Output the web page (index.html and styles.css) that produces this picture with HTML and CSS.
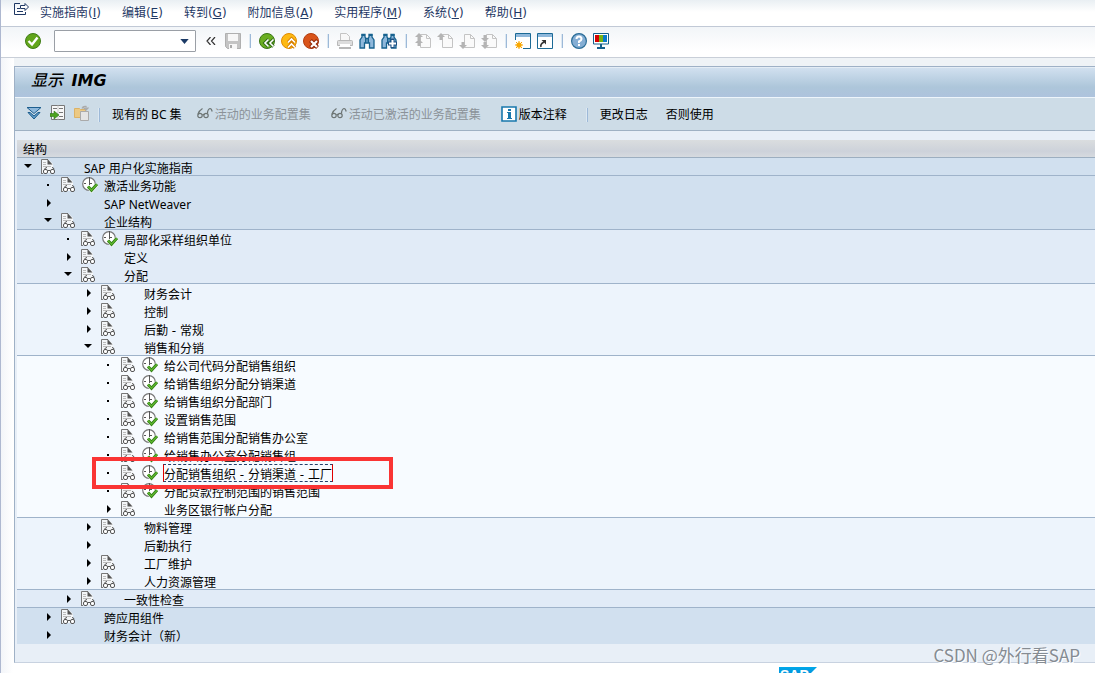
FILE: index.html
```html
<!DOCTYPE html>
<html lang="zh-CN">
<head>
<meta charset="utf-8">
<title>显示 IMG</title>
<link rel="stylesheet" href="styles.css">
</head>
<body>
<svg class="sprite" aria-hidden="true">
  <symbol id="doc" viewBox="0 0 16 16">
    <path d="M1 0h7l5 5v9H1z" fill="#f4f6f8"/>
    <path d="M1.500 15V.500H8M1 14.500h2" fill="none" stroke="#777"/>
    <path d="M7.500 0L12.500 5.500h-5z" fill="#555"/>
    <path d="M3 3.500h3M3 5.500h3M3 7.500h8" stroke="#bbb"/>
    <path d="M4.500 10.500Q5 8.500 7 8.500M14 10.500Q14 8.500 12 8.500M8 11.500h2" fill="none" stroke="#555"/>
    <rect x="3.500" y="10.500" width="4" height="4" rx="1.500" fill="#fff" stroke="#555"/>
    <rect x="10.500" y="10.500" width="4" height="4" rx="1.500" fill="#fff" stroke="#555"/>
  </symbol>
  <symbol id="run" viewBox="0 0 16 16">
    <circle cx="7" cy="7" r="6.300" fill="#fff" stroke="#777" stroke-width="1.200"/>
    <path d="M7.500 0v8M7 6.500h3M2 6.500h2" fill="none" stroke="#555"/>
    <path d="M6 9.500l3.500 4L15 7.500" fill="none" stroke="#fff" stroke-width="4"/>
    <path d="M6 9.500l3.500 3.800L15 7.200" fill="none" stroke="#2f7d18" stroke-width="3"/>
    <path d="M6 9.500l3.500 3.800L15 7.200" fill="none" stroke="#5db52c" stroke-width="1.400"/>
  </symbol>
  <symbol id="glasses" viewBox="0 0 16 16">
    <path d="M.800 8.500Q2 4.500 5.500 2.500M5.500 9q1-1.500 2 0M10.500 7.500Q10.500 3.500 13 2.500q1.500 0 2.200 3" fill="none" stroke="#6c7473" stroke-width="1.200"/>
    <circle cx="3" cy="9.500" r="2.200" fill="none" stroke="#6c7473" stroke-width="1.200"/>
    <circle cx="9" cy="9.500" r="2.200" fill="none" stroke="#6c7473" stroke-width="1.200"/>
  </symbol>
  <symbol id="page" viewBox="0 0 16 16">
    <path d="M5.500 1.500h6l4 4v9h-10z" fill="#fafafa" stroke="#c4c4c4"/>
    <path d="M11.500 1.500v4h4" fill="none" stroke="#c4c4c4"/>
  </symbol>
  <symbol id="up" viewBox="0 0 8 8"><path d="M4 0l4 4H5.500v3h-3V4H0z" fill="#b4b4b4"/></symbol>
  <symbol id="down" viewBox="0 0 8 8"><path d="M4 8l4-4H5.500V1h-3v3H0z" fill="#b4b4b4"/></symbol>
  <symbol id="binoculars" viewBox="0 0 16 16">
    <path d="M3 1.500h3V4l1 1.500h2L10 4V1.500h3V4l2 3v8h-4.500v-5h-5v5H1V7l2-3z" fill="#8fb8db" stroke="#17628f" stroke-width="1.300"/>
    <path d="M6.500 5v5M9.500 5v5M8 5.500v4" stroke="#17628f"/>
    <path d="M2.500 1H6v2H2.500zM10 1h3.500v2H10z" fill="#17628f"/>
  </symbol>
</svg>

<div class="window">
  <nav class="menubar">
    <button class="system-menu" aria-label="系统菜单"><svg class="icon" viewBox="0 0 16 16"><path d="M7 2.500H1.500v11h11V11M4 7.500h3M4 10.500h6" fill="none" stroke="#1f3864"/><path d="M7.500 4.500H12v-2l3.500 3.500L12 9.500v-2H7.500z" fill="#fff" stroke="#1f3864"/></svg></button>
    <button>实施指南(<u>I</u>)</button>
    <button>编辑(<u>E</u>)</button>
    <button>转到(<u>G</u>)</button>
    <button>附加信息(<u>A</u>)</button>
    <button>实用程序(<u>M</u>)</button>
    <button>系统(<u>Y</u>)</button>
    <button>帮助(<u>H</u>)</button>
  </nav>

  <div class="toolbar">
    <button aria-label="确认"><svg class="icon" viewBox="0 0 16 16"><circle cx="8" cy="8" r="7.500" fill="#62a51b" stroke="#3f7d16"/><path d="M3.500 8l3.500 3.500 5.500-7" fill="none" stroke="#fff" stroke-width="2.400"/></svg></button>
    <div class="command">
      <input type="text" aria-label="命令">
      <button aria-label="展开"><svg viewBox="0 0 10 6"><path d="M0 0h10L5 6z" fill="#1b3a66"/></svg></button>
    </div>
    <button class="collapse" aria-label="收起"><svg viewBox="0 0 10 8"><path d="M4.500 0L1 4l3.500 4M9 0L5.500 4 9 8" fill="none" stroke="#333" stroke-width="1.200"/></svg></button>
    <button aria-label="保存"><svg class="icon" viewBox="0 0 16 16"><path d="M.5.500h15v15h-13l-2-2z" fill="#c4c4c4" stroke="#b0b0b0"/><path d="M3 1h10v7H3zM4 11h8v5H4z" fill="#f7f7f7"/><path d="M5 12h2v3H5z" fill="#aaa"/></svg></button>
    <span class="sep"></span>
    <button aria-label="返回"><svg class="icon" viewBox="0 0 16 16"><circle cx="8" cy="8" r="7.500" fill="#6aae20" stroke="#397615"/><path d="M9.500 6.500L6 10l3.500 3.500M14.500 6.500L11 10l3.500 3.500" fill="none" stroke="#2f6a14" stroke-width="3.400"/><path d="M9.500 6.500L6 10l3.500 3.500M14.500 6.500L11 10l3.500 3.500" fill="none" stroke="#fff" stroke-width="1.600"/></svg></button>
    <button aria-label="退出"><svg class="icon" viewBox="0 0 16 16"><circle cx="8" cy="8" r="7.500" fill="#fdb913" stroke="#e08a00"/><path d="M7 9.500L10.500 6 14 9.500M7 14.500l3.500-3.500 3.500 3.500" fill="none" stroke="#d47c00" stroke-width="3.400"/><path d="M7 9.500L10.500 6 14 9.500M7 14.500l3.500-3.500 3.500 3.500" fill="none" stroke="#fff" stroke-width="1.600"/></svg></button>
    <button aria-label="取消"><svg class="icon" viewBox="0 0 16 16"><circle cx="8" cy="8" r="7.500" fill="#d9541a" stroke="#b23d10"/><path d="M7.500 7.500l7 7M14.500 7.500l-7 7" stroke="#8c2408" stroke-width="4"/><path d="M8 8l6 6M14 8l-6 6" stroke="#fff" stroke-width="2.200"/></svg></button>
    <span class="sep"></span>
    <button aria-label="打印"><svg class="icon" viewBox="0 0 16 16"><path d="M3.500 8V.5h6l3 3V8" fill="#f8f8f8" stroke="#c4c4c4"/><path d="M.5 8.500q0-1 1-1h13q1 0 1 1v4H.5z" fill="#ddd" stroke="#b8b8b8"/><path d="M3 11h10v4H3z" fill="#fff"/><path d="M2 15h12" stroke="#b8b8b8" stroke-width="2"/></svg></button>
    <button aria-label="查找"><svg class="icon" viewBox="0 0 16 16"><use href="#binoculars"/></svg></button>
    <button aria-label="继续查找"><svg class="icon" viewBox="0 0 16 16"><use href="#binoculars"/><path d="M9.500 5.500h4v3h2.500v4h-2.500V15h-4v-2.500H7v-4h2.500z" fill="#1b4f83"/><path d="M11.500 7v7M8 10.500h7" stroke="#fff" stroke-width="2"/></svg></button>
    <span class="sep"></span>
    <button aria-label="首页"><svg class="icon" viewBox="0 0 16 16"><use href="#page"/><use href="#up" width="8" height="8"/><use href="#up" y="6" width="8" height="8"/></svg></button>
    <button aria-label="上一页"><svg class="icon" viewBox="0 0 16 16"><use href="#page"/><use href="#up" width="8" height="8"/></svg></button>
    <button aria-label="下一页"><svg class="icon" viewBox="0 0 16 16"><use href="#page"/><use href="#down" y="8" width="8" height="8"/></svg></button>
    <button aria-label="末页"><svg class="icon" viewBox="0 0 16 16"><use href="#page"/><use href="#down" y="1" width="8" height="8"/><use href="#down" y="8" width="8" height="8"/></svg></button>
    <span class="sep"></span>
    <button aria-label="新建会话"><svg class="icon" viewBox="0 0 16 16"><path d="M.5.500h15v15H.5z" fill="#fff" stroke="#1b6a96"/><path d="M1 1h14v3H1z" fill="#8fb8db"/><path d="M0 7h8v9H0z" fill="#fff"/><path d="M4 8v8M0 12h8M1 9l6 6M7 9l-6 6" stroke="#f5a100"/><circle cx="4" cy="12" r="2.600" fill="#f9a800"/></svg></button>
    <button aria-label="创建快捷方式"><svg class="icon" viewBox="0 0 16 16"><path d="M.5.500h15v15H.5z" fill="#fff" stroke="#1b6a96"/><path d="M1 1h14v3H1z" fill="#8fb8db"/><path d="M4 14q-1-3 3-5" fill="none" stroke="#333" stroke-width="1.600"/><path d="M4.500 7H9v4.500z" fill="#333"/></svg></button>
    <span class="sep"></span>
    <button aria-label="帮助"><svg class="icon" viewBox="0 0 16 16"><circle cx="8" cy="8" r="7.400" fill="#85aed4" stroke="#2a6d98" stroke-width="1.200"/><path d="M5.500 6q0-2.500 2.500-2.500T10.500 6q0 1.500-2.500 2.500v1.500M8 11v2" fill="none" stroke="#fff" stroke-width="2"/></svg></button>
    <button aria-label="自定义布局"><svg class="icon" viewBox="0 0 16 16"><path d="M.5.500h15v10.500H.5z" fill="#fff" stroke="#16608c"/><path d="M2 2h4v7H2z" fill="#d40000"/><path d="M6 2h4v7H6z" fill="#76b214"/><path d="M10 2h4v7h-4z" fill="#0a7ac8"/><path d="M8 11v4M4 15h8" stroke="#16608c" stroke-width="2"/></svg></button>
  </div>

  <main class="panel">
    <h1><span>显示</span> IMG</h1>
    <div class="actions">
      <div class="icon-group">
        <button aria-label="全部展开"><svg class="icon" viewBox="0 0 16 16"><path d="M1 2.500h14L8 8.500z" fill="#8fb8db" stroke="#1f5f8f"/><path d="M2 7.500h2l4 3.500 4-3.500h2L8 14z" fill="#5f9ac6" stroke="#1f5f8f"/></svg></button>
        <button aria-label="位置"><svg class="icon" viewBox="0 0 16 16"><path d="M1.500.500h13v14h-13z" fill="#f8f8f8" stroke="#777"/><path d="M8 .500v14" stroke="#ccc"/><path d="M3 3.500h4M9 3.500h4M9 7.500h4M9 11.500h4" stroke="#777"/><path d="M0 8.500h4V6l5 4-5 4v-2.500H0z" fill="#4da31f" stroke="#2c7415" stroke-width=".6"/></svg></button>
        <button aria-label="存在的设置"><svg class="icon" viewBox="0 0 16 16"><path d="M.5 3.500h5l1 1h5v8H.5z" fill="#ecc983" stroke="#dcb266"/><path d="M6.500 6.500h8v9h-8z" fill="#e4e4e4" stroke="#aaa"/><path d="M8 3.500q1-2.500 4-2v3M9.500 2.500l2.500 2.500L14.500 2.500" fill="none" stroke="#aaa" stroke-width="1.300"/></svg></button>
      </div>
      <span class="sep"></span>
      <button class="existing">现有的 BC 集</button>
      <button class="active-set" disabled><svg class="icon"><use href="#glasses"/></svg>活动的业务配置集</button>
      <button class="activated-set" disabled><svg class="icon"><use href="#glasses"/></svg>活动已激活的业务配置集</button>
      <button class="notes"><svg class="icon" viewBox="0 0 16 16"><path d="M1 1h14v14H1z" fill="#fff" stroke="#1878ad" stroke-width="1.600"/><path d="M7 3h3v2H7zM6 6h4v6h1v1H6v-1h1V7H6z" fill="#1878ad"/></svg>版本注释</button>
      <span class="sep"></span>
      <button class="log">更改日志</button>
      <button>否则使用</button>
    </div>

    <section class="structure">
      <h2>结构</h2>
      <ul class="tree" role="tree">
        <li class="row l0 line open"><i></i><svg class="icon"><use href="#doc"/></svg><span>SAP 用户化实施指南</span></li>
        <li class="row l1 leaf"><i></i><svg class="icon"><use href="#doc"/></svg><svg class="icon run"><use href="#run"/></svg><span>激活业务功能</span></li>
        <li class="row l1"><i></i><span>SAP NetWeaver</span></li>
        <li class="row l1 line open"><i></i><svg class="icon"><use href="#doc"/></svg><span>企业结构</span></li>
        <li class="row l2 leaf"><i></i><svg class="icon"><use href="#doc"/></svg><svg class="icon run"><use href="#run"/></svg><span>局部化采样组织单位</span></li>
        <li class="row l2"><i></i><svg class="icon"><use href="#doc"/></svg><span>定义</span></li>
        <li class="row l2 line open"><i></i><svg class="icon"><use href="#doc"/></svg><span>分配</span></li>
        <li class="row l3"><i></i><svg class="icon"><use href="#doc"/></svg><span>财务会计</span></li>
        <li class="row l3"><i></i><svg class="icon"><use href="#doc"/></svg><span>控制</span></li>
        <li class="row l3"><i></i><svg class="icon"><use href="#doc"/></svg><span>后勤 - 常规</span></li>
        <li class="row l3 line open"><i></i><svg class="icon"><use href="#doc"/></svg><span>销售和分销</span></li>
        <li class="row l4 leaf"><i></i><svg class="icon"><use href="#doc"/></svg><svg class="icon run"><use href="#run"/></svg><span>给公司代码分配销售组织</span></li>
        <li class="row l4 leaf"><i></i><svg class="icon"><use href="#doc"/></svg><svg class="icon run"><use href="#run"/></svg><span>给销售组织分配分销渠道</span></li>
        <li class="row l4 leaf"><i></i><svg class="icon"><use href="#doc"/></svg><svg class="icon run"><use href="#run"/></svg><span>给销售组织分配部门</span></li>
        <li class="row l4 leaf"><i></i><svg class="icon"><use href="#doc"/></svg><svg class="icon run"><use href="#run"/></svg><span>设置销售范围</span></li>
        <li class="row l4 leaf"><i></i><svg class="icon"><use href="#doc"/></svg><svg class="icon run"><use href="#run"/></svg><span>给销售范围分配销售办公室</span></li>
        <li class="row l4 leaf"><i></i><svg class="icon"><use href="#doc"/></svg><svg class="icon run"><use href="#run"/></svg><span>给销售办公室分配销售组</span></li>
        <li class="row l4 leaf selected"><i></i><svg class="icon"><use href="#doc"/></svg><svg class="icon run"><use href="#run"/></svg><span>分配销售组织 - 分销渠道 - 工厂</span></li>
        <li class="row l4 leaf"><i></i><svg class="icon"><use href="#doc"/></svg><svg class="icon run"><use href="#run"/></svg><span>分配贷款控制范围的销售范围</span></li>
        <li class="row l4 line"><i></i><svg class="icon"><use href="#doc"/></svg><span>业务区银行帐户分配</span></li>
        <li class="row l3"><i></i><svg class="icon"><use href="#doc"/></svg><span>物料管理</span></li>
        <li class="row l3"><i></i><span>后勤执行</span></li>
        <li class="row l3"><i></i><svg class="icon"><use href="#doc"/></svg><span>工厂维护</span></li>
        <li class="row l3 line"><i></i><svg class="icon"><use href="#doc"/></svg><span>人力资源管理</span></li>
        <li class="row l2 line"><i></i><svg class="icon"><use href="#doc"/></svg><span>一致性检查</span></li>
        <li class="row l1"><i></i><svg class="icon"><use href="#doc"/></svg><span>跨应用组件</span></li>
        <li class="row l1"><i></i><span>财务会计（新）</span></li>
      </ul>
    </section>
  </main>

  <footer class="statusbar">
    <svg class="logo" viewBox="0 0 38 19" role="img" aria-label="SAP"><defs><linearGradient id="sap" x2="0" y2="1"><stop stop-color="#00a8ea"/><stop offset="1" stop-color="#0a6fc0"/></linearGradient></defs><path d="M0 0h38L19 19H0z" fill="url(#sap)"/><text x="1" y="13">SAP</text></svg>
  </footer>
  <p class="watermark">CSDN @外行看SAP</p>
</div>
</body>
</html>
```
FILE: styles.css
```css
*, *::after { box-sizing: border-box; }

body {
  margin: 0;
  color: #000;
  background: #fff;
  font: 12px/18px "Noto Sans", "Noto Sans CJK SC", sans-serif;
}

button {
  display: inline-flex;
  align-items: center;
  margin: 0;
  padding: 0;
  border: 0;
  background: none;
  color: inherit;
  font: inherit;
  white-space: nowrap;
}

.sprite { position: absolute; width: 0; height: 0; }
.icon { display: block; flex: none; width: 16px; height: 16px; }

.window {
  position: relative;
  display: flex;
  flex-direction: column;
  height: 100vh;
  overflow: hidden;
  border-left: 1px solid #aeb8d0;
  background: linear-gradient(90deg, #f3f5f9, #fff 12px);
}

.menubar {
  display: flex;
  align-items: center;
  flex: none;
  gap: 21px;
  height: 27px;
  padding: 0 12px 1px;
  border-bottom: 1px solid #c1c9d6;
  background: linear-gradient(#e9eff3, #fff 12px);
  color: #1f3864;
  font-family: "DejaVu Sans", "Noto Sans CJK SC", sans-serif;
}
.system-menu { margin-right: -10px; padding-bottom: 8px; }

.toolbar {
  display: flex;
  align-items: center;
  flex: none;
  gap: 6px;
  height: 31px;
  padding: 0 24px 2px;
  border-bottom: 1px solid #c9cfd8;
  background: linear-gradient(#f2f5f8, #fff 24px);
}
.sep {
  flex: none;
  width: 2px;
  height: 14px;
  margin: 0 2px;
  border-right: 1px solid #9db9d8;
  background: #dce8f2;
}
.command {
  display: flex;
  align-items: center;
  width: 142px;
  height: 22px;
  margin: 0 4px 0 7px;
  padding-right: 6px;
  border: 1px solid #9a9fa6;
  border-radius: 1px;
  background: #fff;
}
.command input {
  flex: 1;
  min-width: 0;
  height: 18px;
  padding: 0 4px;
  border: 0;
  outline: 0;
  background: none;
  font: inherit;
}
.command svg { display: block; width: 9px; height: 5px; }
.collapse { margin-right: 3px; }
.collapse svg { width: 10px; height: 8px; }

.panel {
  flex: none;
  margin: 8px 0 0 13px;
  border: 1px solid #9fb1c6;
  border-right: 0;
  border-bottom-color: #c8d2e0;
  background: #e8eff7;
  box-shadow: 0 -8px 0 #eff3f6;
}
.panel h1 {
  height: 31px;
  margin: 0;
  padding: 0 16px;
  border-top: 1px solid #e4edf5;
  border-bottom: 1px solid #eef5fb;
  background: linear-gradient(#d1e0ef, #adc6da 66%, #aec3dd);
  font: italic 700 16px/26px "DejaVu Sans", "Noto Sans CJK SC", sans-serif;
}
.panel h1 span { margin-right: 3px; font-weight: 500; }

.actions {
  display: flex;
  align-items: center;
  height: 33px;
  padding: 1px 11px 0;
  border-bottom: 1px solid #9fb1c3;
  background: #cddce7;
}
.icon-group { display: flex; gap: 8px; padding-bottom: 4px; }
.actions .sep { margin: 0 12px 0 8px; }
.existing { margin-right: 15px; }
.active-set, .activated-set { gap: 2px; margin-right: 20px; }
.actions button:disabled { color: #8b9298; }
.actions button .icon { margin-bottom: 2px; }
.icon-group button .icon { margin-bottom: 0; }
.notes { gap: 2px; margin-right: 11px; }
.log { margin-right: 18px; }

.structure { padding: 9px 0 18px 2px; }
.structure h2 {
  height: 18px;
  margin: 0;
  padding: 0 6px;
  border-bottom: 1px solid #9caec0;
  background: linear-gradient(#dadddf, #cdd2da 66%, #d6dadf);
  font: 12px/20px "Noto Sans", "Noto Sans CJK SC", sans-serif;
}

.tree { margin: 0; padding: 0; list-style: none; }
.row {
  position: relative;
  display: grid;
  grid-template-columns: 23px 22px 22px 1fr;
  height: 18px;
  border-bottom: 0 solid #9fb3ca;
  white-space: nowrap;
}
.row.line { border-bottom-width: 1px; }
.row .icon { grid-column: 2; grid-row: 1; margin-top: 1px; }
.row .run { grid-column: 3; }
.row span { grid-column: 4; grid-row: 1; justify-self: start; line-height: 21px; }

.l0, .l1 { background: #d1e0ef; }
.l2 { background: #e1ebf7; }
.l3 { background: #edf4fc; }
.l4 { background: #f7fbff; }
.l3, .l4 { font-family: "DejaVu Sans", "Noto Sans CJK SC", sans-serif; }
.l3 span, .l4 span { line-height: 22px; }
.l1 { padding-left: 20px; }
.l2 { padding-left: 40px; }
.l3 { padding-left: 60px; }
.l4 { padding-left: 80px; }

.row i {
  align-self: start;
  width: 4px;
  height: 8px;
  margin: 5px 0 0 10px;
  background: #000;
  clip-path: polygon(0 0, 100% 50%, 0 100%);
}
.row.open i { width: 8px; height: 4px; margin: 6px 0 0 7px; clip-path: polygon(0 0, 100% 0, 50% 100%); }
.row.leaf i { width: 2px; height: 2px; margin: 8px 0 0 10px; clip-path: none; }

.row.selected span {
  height: 18px;
  margin-left: -1px;
  border: 1px dashed #24406a;
  border-left: 1px solid #e00000;
  border-right: 1px solid #e00000;
  line-height: 20px;
}
.selected::after {
  content: "";
  position: absolute;
  z-index: 1;
  top: -7px;
  left: 75px;
  width: 301px;
  height: 32px;
  border: 4px solid #fa3434;
}

.statusbar { display: flex; flex: none; padding: 4px 0 0 778px; }
.logo { flex: none; width: 38px; height: 19px; }
.logo text { fill: #fff; font: 700 14px "Liberation Sans", sans-serif; }

.watermark {
  position: absolute;
  right: 15px;
  bottom: 8px;
  margin: 0;
  color: #858b92;
  font: 17px/20px "Noto Sans CJK SC", sans-serif;
  text-shadow: 1px 1px 0 #fff;
}
```
